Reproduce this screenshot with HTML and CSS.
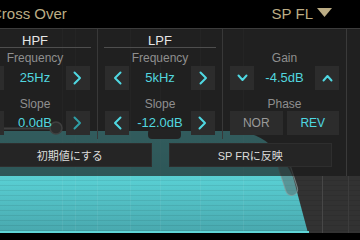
FILE: index.html
```html
<!DOCTYPE html>
<html>
<head>
<meta charset="utf-8">
<link rel="stylesheet" href="styles.css">
</head>
<body>
<div class="screen">
  <svg class="graph" width="360" height="240" viewBox="0 0 360 240">
    <defs>
      <linearGradient id="teal" x1="0" y1="130" x2="0" y2="233" gradientUnits="userSpaceOnUse">
        <stop offset="0" stop-color="#63dcdf"/>
        <stop offset="0.5" stop-color="#58cdd1"/>
        <stop offset="1" stop-color="#48a7ad"/>
      </linearGradient>
    </defs>
    <rect x="0" y="28" width="360" height="206" fill="#323232"/>
    <path d="M0,131 L236,131 C256,133 268,141 276,151 C284,161 289,168 293,177 L308,233 L0,233 Z" fill="url(#teal)"/>
    <g stroke="#000" stroke-opacity="0.07" stroke-width="1">
      <line x1="0" y1="180.5" x2="360" y2="180.5"/><line x1="0" y1="185.5" x2="360" y2="185.5"/>
      <line x1="0" y1="190.5" x2="360" y2="190.5"/><line x1="0" y1="195.5" x2="360" y2="195.5"/>
      <line x1="0" y1="200.5" x2="360" y2="200.5"/><line x1="0" y1="205.5" x2="360" y2="205.5"/>
      <line x1="0" y1="210.5" x2="360" y2="210.5"/><line x1="0" y1="215.5" x2="360" y2="215.5"/>
      <line x1="0" y1="220.5" x2="360" y2="220.5"/><line x1="0" y1="225.5" x2="360" y2="225.5"/>
      <line x1="0" y1="230.5" x2="360" y2="230.5"/>
    </g>
    <g stroke="#fff" stroke-opacity="0.06" stroke-width="1">
      <line x1="62.5" y1="28" x2="62.5" y2="233"/><line x1="75.5" y1="28" x2="75.5" y2="233"/>
      <line x1="97.5" y1="28" x2="97.5" y2="233"/><line x1="130.5" y1="28" x2="130.5" y2="233"/>
      <line x1="160.5" y1="28" x2="160.5" y2="233"/><line x1="200.5" y1="28" x2="200.5" y2="233"/>
      <line x1="243.5" y1="28" x2="243.5" y2="233"/>
    </g>
    <line x1="322.5" y1="176" x2="322.5" y2="233" stroke="#474747"/>
    <line x1="348.5" y1="176" x2="348.5" y2="233" stroke="#3c3c3c"/>
    <rect x="0" y="231" width="309" height="2" fill="#5fd6d8"/>
    <rect x="0" y="233" width="360" height="7" fill="#000"/>
    <line x1="0" y1="128.5" x2="50" y2="128.5" stroke="#8a8a8a" stroke-width="2"/>
    <circle cx="56" cy="128" r="6" fill="#555" stroke="#8a8a8a" stroke-width="1.5"/>
    <rect x="148" y="129" width="33" height="10" rx="4" fill="#3a3a3a"/>
    <rect x="282" y="160" width="12" height="36" rx="6" transform="rotate(-18 288 178)" fill="#5a6a6a" fill-opacity="0.55" stroke="#8a9a9a" stroke-opacity="0.7"/>
  </svg>

  <header class="topbar">
    <span class="title">Cross Over</span>
    <span class="speaker">SP FL<svg class="tri" width="15" height="9" viewBox="0 0 15 9"><polygon points="0,0 15,0 7.5,9" fill="#bcad85"/></svg></span>
  </header>

  <section class="panel">
    <div class="main">
      <div class="cols">
        <div class="col">
          <div class="head">HPF</div>
          <div class="lab lab1">Frequency</div>
          <div class="ctrl">
            <button class="btn"><svg class="chev" width="9" height="14" viewBox="0 0 9 14"><polyline points="7.5,1.5 2,7 7.5,12.5"/></svg></button>
            <span class="val">25Hz</span>
            <button class="btn"><svg class="chev" width="9" height="14" viewBox="0 0 9 14"><polyline points="1.5,1.5 7,7 1.5,12.5"/></svg></button>
          </div>
          <div class="lab lab2">Slope</div>
          <div class="ctrl">
            <button class="btn"><svg class="chev" width="9" height="14" viewBox="0 0 9 14"><polyline points="7.5,1.5 2,7 7.5,12.5"/></svg></button>
            <span class="val">0.0dB</span>
            <button class="btn"><svg class="chev dim" width="9" height="14" viewBox="0 0 9 14"><polyline points="1.5,1.5 7,7 1.5,12.5"/></svg></button>
          </div>
        </div>
        <div class="col">
          <div class="head">LPF</div>
          <div class="lab lab1">Frequency</div>
          <div class="ctrl">
            <button class="btn"><svg class="chev" width="9" height="14" viewBox="0 0 9 14"><polyline points="7.5,1.5 2,7 7.5,12.5"/></svg></button>
            <span class="val">5kHz</span>
            <button class="btn"><svg class="chev" width="9" height="14" viewBox="0 0 9 14"><polyline points="1.5,1.5 7,7 1.5,12.5"/></svg></button>
          </div>
          <div class="lab lab2">Slope</div>
          <div class="ctrl">
            <button class="btn"><svg class="chev" width="9" height="14" viewBox="0 0 9 14"><polyline points="7.5,1.5 2,7 7.5,12.5"/></svg></button>
            <span class="val">-12.0dB</span>
            <button class="btn"><svg class="chev" width="9" height="14" viewBox="0 0 9 14"><polyline points="1.5,1.5 7,7 1.5,12.5"/></svg></button>
          </div>
        </div>
        <div class="col">
          <div class="head blank"></div>
          <div class="lab lab1">Gain</div>
          <div class="ctrl">
            <button class="btn"><svg class="chev" width="11" height="8" viewBox="0 0 11 8"><polyline points="1.5,1.5 5.5,6 9.5,1.5"/></svg></button>
            <span class="val">-4.5dB</span>
            <button class="btn"><svg class="chev" width="11" height="8" viewBox="0 0 11 8"><polyline points="1.5,6.5 5.5,2 9.5,6.5"/></svg></button>
          </div>
          <div class="lab lab2">Phase</div>
          <div class="phase">
            <button class="btn seg">NOR</button>
            <button class="btn seg on">REV</button>
          </div>
        </div>
      </div>
      <div class="actions">
        <button class="act">初期値にする</button>
        <button class="act">SP FRに反映</button>
      </div>
    </div>
    <div class="extra"></div>
  </section>
</div>
</body>
</html>
```

FILE: styles.css
```css
* { box-sizing: border-box; }
html, body { margin: 0; padding: 0; background: #000; }
body {
  font-family: "Liberation Sans", "Noto Sans CJK JP", sans-serif;
}
button { font: inherit; margin: 0; }

.screen {
  position: relative;
  width: 360px;
  height: 240px;
  overflow: hidden;
}

.graph {
  position: absolute;
  left: 0;
  top: 0;
  z-index: 0;
}

.topbar {
  position: relative;
  z-index: 1;
  height: 28px;
  background: #000;
  display: flex;
  align-items: center;
  justify-content: space-between;
  color: #bcad85;
  font-size: 15px;
  line-height: 28px;
  white-space: nowrap;
}
.title { margin-left: -9px; }
.speaker {
  display: flex;
  align-items: center;
  gap: 4px;
  margin-right: 28px;
}
.tri { margin-top: -3px; }

.panel {
  position: relative;
  z-index: 1;
  display: flex;
  margin-left: -27px;
  width: 400px;
  background: rgba(23, 23, 23, 0.65);
  border-top: 1px solid #3c3c3c;
}
.main {
  width: 374px;
  flex: none;
  border-right: 1px solid #3a3a3a;
  padding-bottom: 9px;
}
.extra { flex: 1; }

.cols {
  display: grid;
  grid-template-columns: 125px 125px 1fr;
}
.col {
  padding-bottom: 4px;
}
.col:not(:last-child) { border-right: 1px solid #383838; }

.head {
  height: 19px;
  padding-top: 5px;
  line-height: 13px;
  font-size: 13px;
  color: #e6e6e6;
  text-align: center;
  border-bottom: 1px solid #4e4e4e;
  margin: 0 6px;
}
.head.blank { border-bottom-color: transparent; }

.lab {
  font-size: 12px;
  line-height: 13px;
  color: #8f8f8f;
  text-align: center;
}
.lab1 { height: 18px; padding-top: 4px; }
.lab2 { height: 21px; padding-top: 8px; }

.ctrl {
  height: 24px;
  display: flex;
  align-items: center;
  justify-content: space-between;
  padding: 0 7px;
}
.btn {
  width: 24px;
  height: 24px;
  padding: 0;
  border: 0;
  background: #2c2c2c;
  display: flex;
  align-items: center;
  justify-content: center;
}
.val {
  color: #52d6df;
  font-size: 13px;
  line-height: 24px;
}
.chev polyline {
  fill: none;
  stroke: #4fd8e2;
  stroke-width: 2;
  stroke-linecap: round;
  stroke-linejoin: round;
}
.chev.dim polyline { stroke: #2f9ea6; }

.phase {
  height: 24px;
  display: flex;
  gap: 4px;
  padding: 0 7px;
}
.seg {
  flex: 1;
  width: auto;
  font-size: 12px;
  color: #9a9a9a;
}
.seg.on { color: #4fd8e2; }

.actions {
  display: flex;
  gap: 17px;
  padding: 0 14px 0 15px;
  margin-top: 4px;
}
.act {
  flex: 1;
  height: 24px;
  padding: 0;
  background: #252525;
  border: 1px solid #2e2e2e;
  color: #dcdcdc;
  font-size: 11px;
  white-space: nowrap;
}
```
